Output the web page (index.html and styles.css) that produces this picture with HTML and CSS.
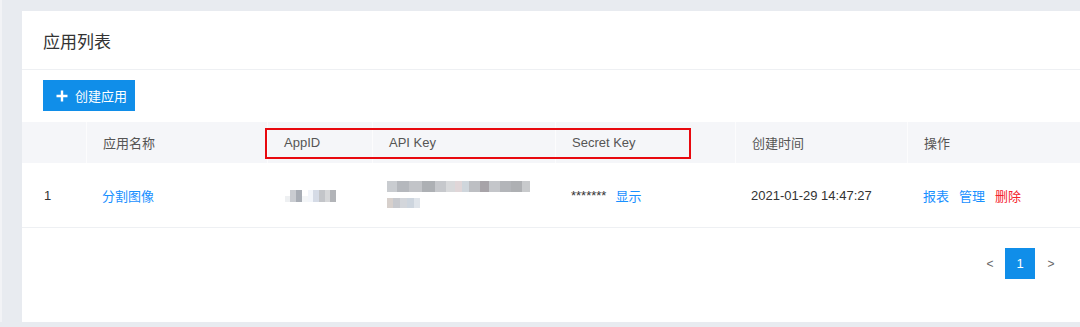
FILE: index.html
```html
<!DOCTYPE html>
<html lang="zh-CN">
<head>
<meta charset="utf-8">
<link rel="stylesheet" href="styles.css">
</head>
<body>
<div class="page">
  <div class="card">
    <div class="card-head">应用列表</div>
    <div class="toolbar">
      <button class="btn-create"><svg class="plus" width="12" height="12" viewBox="0 0 12 12"><path d="M6 0.5v11M0.5 6h11" stroke="#fff" stroke-width="2.4"/></svg>创建应用</button>
    </div>
    <div class="table">
      <div class="row head">
        <div class="cell">&nbsp;</div>
        <div class="cell">应用名称</div>
        <div class="cell">AppID</div>
        <div class="cell">API Key</div>
        <div class="cell">Secret Key</div>
        <div class="cell">创建时间</div>
        <div class="cell">操作</div>
      </div>
      <div class="row body">
        <div class="cell idx">1</div>
        <div class="cell"><a class="link">分割图像</a></div>
        <div class="cell">
          <div class="mosaic m-appid">
            <i style="background:#eef0f2;width:5px"></i><i style="background:#c9ccd1;width:6px"></i><i style="background:#a8adb5;width:6px"></i><i style="background:#f4f6f8;width:6px"></i><i style="background:#f2f5fa;width:5px"></i><i style="background:#d5dbe6;width:6px"></i><i style="background:#c3c5c9;width:6px"></i><i style="background:#d6d7d9;width:5px"></i><i style="background:#b2b4b8;width:6px"></i>
          </div>
        </div>
        <div class="cell apikey">
          <div class="mosaic m-line1">
            <i style="background:#c9ccd0;width:10px"></i><i style="background:#b5b8bd;width:12px"></i><i style="background:#c2c4c8;width:13px"></i><i style="background:#adb0b4;width:13px"></i><i style="background:#c6c8cc;width:11px"></i><i style="background:#d8d9db;width:9px"></i><i style="background:#e0d6d8;width:7px"></i><i style="background:#cfd6dc;width:7px"></i><i style="background:#bdbfc3;width:11px"></i><i style="background:#a7a3a8;width:9px"></i><i style="background:#c4c6ca;width:11px"></i><i style="background:#b3b5b9;width:11px"></i><i style="background:#aeb0b3;width:11px"></i><i style="background:#c8cacc;width:8px"></i>
          </div>
          <div class="mosaic m-line2">
            <i style="background:#d7d0cc;width:6px"></i><i style="background:#c7c9ce;width:7px"></i><i style="background:#d3d6db;width:7px"></i><i style="background:#cdd5de;width:7px"></i><i style="background:#dfe4ea;width:6px"></i>
          </div>
        </div>
        <div class="cell"><span class="stars">*******</span><a class="link">显示</a></div>
        <div class="cell">2021-01-29 14:47:27</div>
        <div class="cell ops"><a class="link">报表</a><a class="link">管理</a><a class="link danger">删除</a></div>
      </div>
      <div class="highlight"></div>
    </div>
    <div class="pager">
      <span class="pg-arrow">&lt;</span>
      <span class="pg-num">1</span>
      <span class="pg-arrow">&gt;</span>
    </div>
  </div>
</div>
</body>
</html>
```

FILE: styles.css
```css
* { box-sizing: border-box; }
html, body { margin: 0; padding: 0; }
body {
  background: #e8ebf0;
  font-family: "Liberation Sans", "Noto Sans CJK SC", sans-serif;
  color: #333;
  width: 1080px;
  height: 327px;
  overflow: hidden;
}
.page {
  padding: 11px 0 0 22px;
  border-left: 2px solid #f2f3f6;
}
.card {
  background: #fff;
  height: 311px;
  margin-left: -2px;
}
.card-head {
  height: 59px;
  padding: 19px 0 0 21px;
  font-size: 17px;
  color: #333;
  border-bottom: 1px solid #eef0f3;
  font-family: "Noto Sans CJK SC", sans-serif;
  line-height: 22px;
}
.toolbar {
  padding: 10px 0 11px 21px;
  height: 52px;
}
.btn-create {
  display: flex;
  align-items: center;
  gap: 7px;
  width: 92px;
  height: 31px;
  padding: 0 0 0 13px;
  border: none;
  background: #108ee9;
  color: #fff;
  font-size: 13px;
  font-family: "Noto Sans CJK SC", sans-serif;
}
.table {
  position: relative;
}
.row {
  display: grid;
  grid-template-columns: 64px 181px 105px 183px 180px 172px 173px;
  font-size: 13px;
}
.row.head {
  height: 41px;
  background: #f5f6f9;
  color: #555;
}
.row.head .cell + .cell {
  border-left: 1px solid #fcfcfd;
}
.row.body {
  height: 65px;
  border-bottom: 1px solid #eef0f3;
  color: #333;
}
.cell {
  display: flex;
  align-items: center;
  padding-left: 16px;
  font-family: "Liberation Sans", "Noto Sans CJK SC", sans-serif;
}
.cell.idx { padding-left: 22px; }
.link { color: #1890ff; }
.link.danger { color: #f5222d; }
.stars { margin-right: 9px; color: #333; }
.ops .link { margin-right: 10px; }
.apikey {
  flex-direction: column;
  align-items: flex-start;
  justify-content: center;
  gap: 6px;
  padding-left: 15px;
}
.mosaic { display: flex; }
.mosaic i { display: block; }
.m-appid { height: 12px; margin-left: 2px; margin-top: 2px; }
.m-appid i:nth-child(1), .m-appid i:nth-child(4) { height: 6px; align-self: flex-end; }
.m-line1 { height: 11px; margin-top: -2px; }
.m-line2 { height: 10px; }
.highlight {
  position: absolute;
  left: 243px;
  top: 6px;
  width: 426px;
  height: 31px;
  border: 2px solid #e8090f;
}
.pager {
  display: flex;
  justify-content: flex-end;
  align-items: center;
  padding: 20px 20px 0 0;
}
.pg-arrow {
  width: 18px;
  text-align: center;
  font-size: 12px;
  color: #666;
}
.pg-arrow:first-child { margin-right: 6px; }
.pg-arrow:last-child { margin-left: 7px; }
.pg-num {
  width: 30px;
  height: 31px;
  background: #108ee9;
  color: #fff;
  display: flex;
  align-items: center;
  justify-content: center;
  font-size: 13px;
}
```
